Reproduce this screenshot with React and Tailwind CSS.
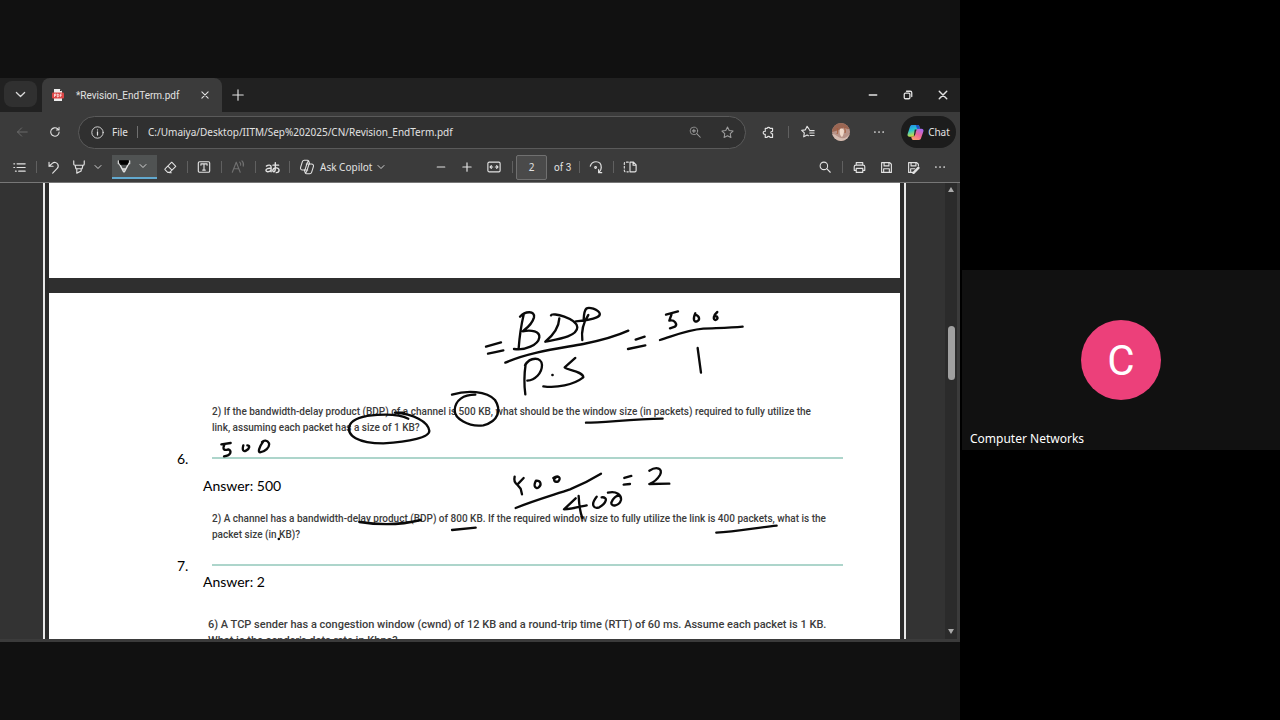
import React from 'react';
import { clsx } from 'clsx';

const Icon = ({ size = 'size-4', className, children }) => (
  <svg
    viewBox="0 0 16 16"
    className={clsx('shrink-0', size, className)}
    fill="none"
    stroke="currentColor"
    strokeWidth="1.1"
    strokeLinecap="round"
    strokeLinejoin="round"
    aria-hidden="true"
  >
    {children}
  </svg>
);

const Chevron = ({ size = 'size-2' }) => (
  <Icon size={size}>
    <path d="M2 5l6 6 6-6" strokeWidth="1.8" />
  </Icon>
);

const IconButton = ({ label, className = 'w-[26px]', children }) => (
  <button type="button" aria-label={label} className={clsx('flex h-6 shrink-0 items-center justify-center', className)}>
    {children}
  </button>
);

const Separator = () => (
  <span className="flex w-2 shrink-0 justify-center">
    <span className="h-3 w-px bg-[#606060]" />
  </span>
);

const CopilotOutline = () => (
  <Icon>
    <path d="M10.5 4.5L9.8 2.3C9.5 1.6 9 1.3 8.3 1.3H5.2c-.9 0-1.5.5-1.8 1.4L1.6 8.4c-.4 1.5.4 2.6 1.9 2.6h1.4M5.5 11.5l.7 2.2c.3.7.8 1 1.5 1h3.1c.9 0 1.5-.5 1.8-1.4l1.8-5.7c.4-1.5-.4-2.6-1.9-2.6h-1.4M4.9 11c.8 0 1.2-.4 1.4-1.1l1.9-6c.3-.9.7-1.5 1.4-1.9M11.1 5c-.8 0-1.2.4-1.4 1.1l-1.9 6c-.3.9-.7 1.5-1.4 1.9M7.3 5h3.8M4.9 11h3.8" />
  </Icon>
);

const CopilotLogo = () => (
  <svg viewBox="0 0 16 16" className="size-[17px] shrink-0" aria-hidden="true">
    <defs>
      <linearGradient id="cool" x1="0" y1="0" x2="0.3" y2="1">
        <stop offset="0" stopColor="#2386e8" />
        <stop offset="0.5" stopColor="#29c7d2" />
        <stop offset="1" stopColor="#d4dd3c" />
      </linearGradient>
      <linearGradient id="warm" x1="0.8" y1="0" x2="0.2" y2="1">
        <stop offset="0" stopColor="#a56af4" />
        <stop offset="0.5" stopColor="#ee6599" />
        <stop offset="1" stopColor="#ffa36d" />
      </linearGradient>
    </defs>
    <path d="M4.8 1h5c1 0 1.5.5 1.8 1.4l.6 2h-1.5c-1 0-1.5.5-1.8 1.5L7.5 10.500c-.3 1-.9 1.500-1.900 1.500H2.500C.9 12 .1 10.900.6 9.400L2.800 2.500C3.100 1.500 3.800 1 4.800 1z" fill="url(#cool)" />
    <path d="M11.200 15h-5c-1 0-1.500-.5-1.800-1.400l-.5-1.600h1.500c1 0 1.600-.5 1.900-1.500l1.500-4.600c.3-1 .8-1.500 1.800-1.500h2.900c1.600 0 2.400 1.100 1.900 2.600l-2.200 6.500c-.3 1-1 1.500-2 1.500z" fill="url(#warm)" />
    <path d="M8.300 1h1.500c1 0 1.500.5 1.800 1.400l.6 2H9.400z" fill="#2253c8" />
    <path d="M7.300 5.200h1.500L7.500 10.500 6.400 11.400z" fill="#252525" />
  </svg>
);

const TabBar = () => (
  <div className="flex h-[34px] items-stretch bg-[#212121]">
    <button type="button" aria-label="Tab actions" className="mt-[3px] ml-1 flex h-[26px] w-[33px] items-center justify-center rounded-lg bg-[#303030] text-[#dadada]">
      <Chevron size="size-[11px]" />
    </button>
    <div className="ml-[5px] flex w-[180px] items-center rounded-t-lg bg-[#3b3b3b] pr-3 pl-[10px]">
      <svg viewBox="0 0 12 12" className="size-3 shrink-0" aria-hidden="true">
        <path d="M2 0h6l2 2v10H2z" fill="#eeeeee" />
        <path d="M8 0l2 2H8z" fill="#222222" />
        <rect y="3.500" width="12" height="6" rx="1" fill="#dc4545" />
        <path d="M2.500 8V5h1.300v1.500H2.500M5.300 5v3h.8l.7-1.500-.7-1.500zM8.300 8V5h1.500M8.300 6.500h1.300" fill="none" stroke="#ffffff" strokeWidth="0.7" />
      </svg>
      <span className="ml-3 flex-1 font-[Roboto,sans-serif] text-[10px] whitespace-nowrap">*Revision_EndTerm.pdf</span>
      <button type="button" aria-label="Close tab">
        <Icon size="size-[10px]">
          <path d="M3 3l10 10M13 3L3 13" strokeWidth="1.700" />
        </Icon>
      </button>
    </div>
    <IconButton label="New tab" className="mt-[5px] ml-1 w-6">
      <Icon size="size-[14px]">
        <path d="M8 2v12M2 8h12" strokeWidth="1.300" />
      </Icon>
    </IconButton>
    <div className="ml-auto flex items-center">
      <IconButton label="Minimize" className="w-[35px]">
        <Icon size="size-3">
          <path d="M3 8h10" strokeWidth="1.800" />
        </Icon>
      </IconButton>
      <IconButton label="Restore" className="w-[35px]">
        <Icon size="size-3">
          <rect x="3" y="5.500" width="7.500" height="7.500" rx="1.500" strokeWidth="1.700" />
          <path d="M6 3h5c1.200 0 2 .8 2 2v5" strokeWidth="1.700" />
        </Icon>
      </IconButton>
      <IconButton label="Close" className="w-[35px]">
        <Icon size="size-3">
          <path d="M3 3l10 10M13 3L3 13" strokeWidth="1.900" />
        </Icon>
      </IconButton>
    </div>
  </div>
);

const AddressBar = () => (
  <div className="flex h-10 items-center pr-1 pl-[9px]">
    <IconButton label="Back">
      <Icon size="size-3" className="text-[#6b6b6b]">
        <path d="M15 8H2M7.500 2.500L2 8l5.500 5.500" strokeWidth="1.300" />
      </Icon>
    </IconButton>
    <IconButton label="Refresh" className="ml-[7px] w-[26px]">
      <Icon size="size-3">
        <path d="M13.500 8A5.600 5.600 0 1 1 11.500 3.700L13.200 5.200M13.400 1.800v3.500H9.900" strokeWidth="1.400" />
      </Icon>
    </IconButton>
    <form className="ml-[10px] flex h-[33px] flex-1 items-center rounded-full border border-[#5a5a5a] bg-[#303030] pr-[10px] pl-3">
      <Icon size="size-[13px]">
        <circle cx="8" cy="8" r="7" />
        <path d="M8 7.200v4M8 4.600v.2" strokeWidth="1.500" />
      </Icon>
      <label htmlFor="address" className="ml-2 text-[10px]">File</label>
      <span className="ml-[9px] h-3 w-px bg-[#707070]" />
      <input id="address" type="text" defaultValue="C:/Umaiya/Desktop/IITM/Sep%202025/CN/Revision_EndTerm.pdf" className="ml-[10px] min-w-0 flex-1 bg-transparent text-[10px] outline-none" />
      <IconButton label="Zoom" className="w-[33px] text-[#9c9c9c]">
        <Icon size="size-3">
          <circle cx="6.500" cy="6.500" r="5" />
          <path d="M10.300 10.300L15 15M6.500 4.500v4M4.500 6.500h4" strokeWidth="1.400" />
        </Icon>
      </IconButton>
      <IconButton label="Add to favorites" className="ml-2 w-4 text-[#9c9c9c]">
        <Icon size="size-[13px]">
          <path d="M8 1.200l2.100 4.300 4.700.7-3.400 3.300.8 4.700L8 12l-4.200 2.200.8-4.700L1.200 6.200l4.700-.7z" strokeWidth="1.300" />
        </Icon>
      </IconButton>
    </form>
    <IconButton label="Extensions" className="ml-[9px] w-[26px]">
      <Icon size="size-[13px]">
        <path d="M4 3h2.300a1.900 1.900 0 0 1 3.600 0H13v3.600a1.600 1.600 0 1 0 0 3V14H9.900a1.900 1.900 0 0 0-3.600 0H4v-3.800a1.900 1.900 0 1 1 0-3.600z" strokeWidth="1.400" />
      </Icon>
    </IconButton>
    <span className="mx-[3px] flex"><Separator /></span>
    <IconButton label="Favorites" className="w-[25px]">
      <Icon size="size-[14px]">
        <path d="M9.500 5.200L7 1.500 5 5.500l-4.200.6 3 3-.7 4.400L7 11.500l1.500.8M10 6.500h5M10 9.200h5M10.500 12h4.500" strokeWidth="1.300" />
      </Icon>
    </IconButton>
    <button type="button" aria-label="Profile" className="ml-[12px] shrink-0">
      <svg viewBox="0 0 18 18" className="size-[18px] rounded-full" aria-hidden="true">
        <rect width="18" height="18" fill="#b89489" />
        <path d="M0 0h18v5c-3 3-4-1-7 0S6 8 0 9z" fill="#9a6653" />
        <path d="M0 11c4 0 5 3 9 4s6-1 9-4v7H0z" fill="#d5bcb1" />
        <path d="M8 6c2-1 4 0 4 2s-1 5-2 6c-2-1-3-5-2-8z" fill="#f0d8c8" />
        <path d="M5 5c1 2 1 4 0 6M13 4c-1 2 1 3 0 6" stroke="#a65b39" fill="none" />
      </svg>
    </button>
    <IconButton label="Settings and more" className="ml-4 w-[26px]">
      <Icon size="size-3">
        <path d="M2.500 8h.1M8 8h.1M13.500 8h.1" strokeWidth="2.300" />
      </Icon>
    </IconButton>
    <button type="button" className="ml-[9px] flex h-8 w-[55px] shrink-0 items-center justify-center gap-1 rounded-full bg-[#1c1c1c] text-[10px]">
      <CopilotLogo />
      Chat
    </button>
  </div>
);

const PdfToolbar = () => (
  <div className="flex h-[31px] items-center border-b border-[#777777] px-[6px] text-[10px]">
    <IconButton label="Contents">
      <Icon size="size-[13px]">
        <path d="M5 3.500h10M5 8h10M7 12.500h8M1 3.500h1M1 8h1M3 12.500h1" strokeWidth="1.400" />
      </Icon>
    </IconButton>
    <Separator />
    <IconButton label="Undo">
      <Icon size="size-[13px]">
        <path d="M2.500 1.500v5h5M2.500 6.500L6.500 3C9 .8 12 1.800 13.300 4c1 2 .5 4-1 5.500L7 15" strokeWidth="1.400" />
      </Icon>
    </IconButton>
    <IconButton label="Highlight">
      <Icon size="size-[14px]">
        <path d="M2 1v3.500c0 1 .5 1.500 1.500 1.500h9c1 0 1.500-.5 1.500-1.500V1M3.500 6l1 4h7l1-4M5.500 10v5l5-2.500V10" strokeWidth="1.300" />
      </Icon>
    </IconButton>
    <IconButton label="Highlight color" className="w-3">
      <Chevron size="size-2" />
    </IconButton>
    <div className="ml-2 flex h-6 w-[45px] items-center border-b-2 border-[#62a9cf] bg-[#505353]">
      <IconButton label="Draw" className="w-6">
        <Icon size="size-[14px]">
          <path d="M2.500 5l5 9.500h1l5-9.500M6 11.500h4" strokeWidth="1.600" />
          <path d="M3 2h10l-1 4H4z" fill="#000000" stroke="#000000" />
          <path d="M1.500 5.500V2M14.500 5.500V2" strokeWidth="1.300" />
        </Icon>
      </IconButton>
      <IconButton label="Pen options" className="w-[14px]">
        <Chevron size="size-2" />
      </IconButton>
    </div>
    <IconButton label="Erase">
      <Icon size="size-[13px]">
        <path d="M9.500 1.500l5 5L7 14H4.500L1.500 11c-.6-.6-.6-1 0-1.500zM4.800 6.200l5 5M7 14.500h2" strokeWidth="1.300" />
      </Icon>
    </IconButton>
    <Separator />
    <IconButton label="Add text">
      <Icon size="size-[14px]">
        <rect x="1.500" y="2" width="13" height="12" rx="1.500" strokeWidth="1.300" />
        <path d="M4.500 6V4.500h7V6M8 4.500v7M6.500 11.500h3" strokeWidth="1.300" />
      </Icon>
    </IconButton>
    <Separator />
    <IconButton label="Read aloud" className="w-[26px] text-[#707070]">
      <Icon size="size-[14px]">
        <path d="M1.500 14L6 2.500 10.500 14M3 10h6M10 2.500c1 .8 1.300 2 1 3.500M12.500 1c1.800 1.700 2.200 3.800 1.500 6" strokeWidth="1.300" />
      </Icon>
    </IconButton>
    <Separator />
    <IconButton label="Translate">
      <Icon size="size-[15px]">
        <path d="M1.500 6.500c2-1.500 5-1.500 5 1v5M6.500 9c-3-.5-5.500.3-5.500 2s3 2.500 5.500 0M8.500 5.500h6M11 3v5.500c0 2 0 4-1.500 4-2 0-1.500-3.500 1.500-4s4 1 4 2.500-1.500 2.500-3 2.500" strokeWidth="1.500" />
      </Icon>
    </IconButton>
    <Separator />
    <button type="button" className="flex h-6 w-[100px] shrink-0 items-center gap-[5px] pl-[6px] whitespace-nowrap">
      <CopilotOutline />
      Ask Copilot
      <Chevron size="size-2" />
    </button>
    <IconButton label="Zoom out" className="ml-[35px] w-[26px]">
      <Icon size="size-3">
        <path d="M3 8h10" strokeWidth="1.600" />
      </Icon>
    </IconButton>
    <IconButton label="Zoom in">
      <Icon size="size-3">
        <path d="M8 2.500v11M2.500 8h11" strokeWidth="1.600" />
      </Icon>
    </IconButton>
    <IconButton label="Fit to width" className="w-7">
      <Icon size="size-[14px]">
        <rect x="1" y="2.500" width="14" height="11" rx="1.500" strokeWidth="1.300" />
        <path d="M3.500 8h3M9.500 8h3M5 6.500L3.500 8 5 9.500M11 6.500L12.500 8 11 9.500" strokeWidth="1.300" />
      </Icon>
    </IconButton>
    <Separator />
    <input type="text" defaultValue="2" aria-label="Page number" className="h-[25px] w-[31px] rounded-xs border border-[#707070] bg-[#4a4a4a] text-center text-[10px] outline-none" />
    <span className="ml-[7px] w-[21px] font-[Roboto,sans-serif] text-[10px] whitespace-nowrap">of 3</span>
    <Separator />
    <IconButton label="Rotate">
      <Icon size="size-[14px]">
        <path d="M1.500 7C2.500 3.500 5 2 8 2c4 0 6 3 6 6.500 0 2-.8 4-2.500 5.500M14.500 14.500h-3.500V11" strokeWidth="1.400" />
        <circle cx="7.500" cy="8.500" r="1" strokeWidth="1.300" />
      </Icon>
    </IconButton>
    <Separator />
    <IconButton label="Page view">
      <Icon size="size-[14px]">
        <path d="M8 2.500h4l3 3v6.500c0 1-.5 1.500-1.500 1.500H8zM11.500 2.500V6H15" strokeWidth="1.300" />
        <path d="M6 2.500H3c-1 0-1.500.5-1.500 1.500v8c0 1 .5 1.500 1.500 1.500h3" strokeDasharray="2 2.200" strokeWidth="1.300" />
      </Icon>
    </IconButton>
    <div className="ml-auto flex items-center">
      <IconButton label="Find">
        <Icon size="size-3">
          <circle cx="6.500" cy="6.500" r="5" strokeWidth="1.400" />
          <path d="M10.300 10.300L15 15" strokeWidth="1.500" />
        </Icon>
      </IconButton>
      <Separator />
      <IconButton label="Print">
        <Icon size="size-[13px]">
          <path d="M4 5V2h8v3M4 11.500H1.500V7c0-1.300.7-2 2-2h9c1.300 0 2 .7 2 2v4.500H12M4 9h8v5H4z" strokeWidth="1.400" />
        </Icon>
      </IconButton>
      <IconButton label="Save" className="w-7">
        <Icon size="size-[13px]">
          <path d="M2 2h10l2 2v10H2zM5 2v4h6V2M4.500 14V9.500h7V14" strokeWidth="1.400" />
        </Icon>
      </IconButton>
      <IconButton label="Save as">
        <Icon size="size-[13px]">
          <path d="M7 14H2V2h10l2 2v2M5 2v4h6V2M4.500 14V9.500h5" strokeWidth="1.400" />
          <path d="M8 14.500l6-6" strokeWidth="3" />
        </Icon>
      </IconButton>
      <IconButton label="More" className="w-7">
        <Icon size="size-3">
          <path d="M2.500 8h.1M8 8h.1M13.500 8h.1" strokeWidth="2.300" />
        </Icon>
      </IconButton>
    </div>
  </div>
);

const Ink = () => (
  <svg
    viewBox="0 0 960 456"
    className="pointer-events-none absolute top-0 left-0 h-auto w-full"
    fill="none"
    stroke="#0a0a0a"
    strokeLinecap="round"
    strokeLinejoin="round"
    aria-hidden="true"
  >
    {/* BDP / P.S = 500 / 1 */}
    <g transform="translate(470 107) scale(0.3333)" strokeWidth="7">
      <path d="M48 170L93 157M54 191Q75 187 100 181" />
      <path d="M161 74Q150 120 146 175M150 80C166 62 196 62 192 82C186 105 165 118 158 124C185 118 210 125 208 142C205 165 165 182 132 177" />
      <path d="M268 85Q266 122 226 155M243 76C246 66 320 85 322 112C322 140 260 148 226 155" />
      <path d="M355 75Q332 110 337 150M341 88C343 50 352 50 370 56C394 66 394 76 380 82C360 91 340 92 318 94" />
      <path d="M106 218C180 185 270 175 340 162C400 150 440 138 475 122" />
      <path d="M167 222Q160 270 166 313M165 226C180 200 215 200 216 225C216 250 195 270 172 272M247 255h1" />
      <path d="M316 204L284 232C290 240 340 244 340 262C310 285 260 295 220 289" />
      <path d="M497 149L524 140M474 177L526 166" />
      <path d="M588 74L624 64M605 72L598 92C613 88 624 102 615 110L600 115" />
      <path d="M676 70C668 88 672 97 681 94C691 90 689 78 676 74M742 66C730 76 728 90 737 90C746 86 744 76 732 80" />
      <path d="M570 150C610 138 650 120 700 116C745 114 780 114 818 110M683 174L693 248" />
    </g>
    {/* answer and circle on the first question */}
    <g transform="translate(160 197) scale(0.3333)" strokeWidth="7">
      <path d="M184 193L212 189M193 194C186 210 195 212 205 208C216 212 214 226 192 229" />
      <path d="M250 196C246 210 250 216 258 212C270 206 270 196 262 196M310 184C298 200 293 217 300 217C315 216 330 202 327 190C322 180 312 180 306 186" />
      <path d="M745 116C710 98 590 98 570 134C556 168 596 190 670 190C750 186 810 172 808 152C804 124 760 102 705 98h28" />
    </g>
    {/* 800 / 400 = 2 */}
    <g transform="translate(430 197) scale(0.3333)" strokeWidth="7">
      <path d="M66 44C110 30 170 32 195 60C215 90 205 125 160 136C115 142 73 115 74 90C76 60 100 44 136 44" />
      <path d="M468 128C520 128 600 118 698 116M66 450L137 443M859 458C920 455 980 443 1040 437" />
      <path d="M254 290Q250 306 262 314L272 326L276 343M281 294L262 314M318 302C308 320 318 328 326 322C336 314 332 302 320 302M370 294C385 284 395 294 385 304C375 308 365 300 380 290" />
      <path d="M257 384C310 362 370 345 420 328C460 312 490 295 513 281" />
      <path d="M437 355L402 388C430 386 450 380 470 376M446 348Q448 390 457 414" />
      <path d="M500 350C480 375 492 388 508 382C530 370 535 350 515 352M534 338C560 332 575 345 573 360C568 378 543 382 544 368C548 355 560 345 568 348" />
      <path d="M583 294L604 288M581 314L600 312M658 272C680 258 700 265 690 285C680 302 668 308 658 312L718 311" />
    </g>
    <g transform="translate(160 317) scale(0.3333)" strokeWidth="7">
      <path d="M598 66C650 74 720 76 782 60M356 117h1" />
    </g>
  </svg>
);

const questions = [
  {
    number: '6.',
    lines: [
      '2) If the bandwidth-delay product (BDP) of a channel is 500 KB, what should be the window size (in packets) required to fully utilize the',
      'link, assuming each packet has a size of 1 KB?'
    ],
    answer: 'Answer: 500',
    spacing: 'mt-[11px] mb-[17px]'
  },
  {
    number: '7.',
    lines: [
      '2) A channel has a bandwidth-delay product (BDP) of 800 KB. If the required window size to fully utilize the link is 400 packets, what is the',
      'packet size (in KB)?'
    ],
    answer: 'Answer: 2',
    spacing: 'mb-[27px]'
  }
];

const Document = () => (
  <main className="relative flex h-[456px] overflow-hidden bg-[#333333]">
    <div className="ml-[43px] flex flex-1 flex-col border-x-2 border-[#e8e8e8] bg-[#2b2b2b] px-1">
      <div className="h-[95px] shrink-0 bg-white" />
      <div className="h-[15px] shrink-0 bg-[#2f2f2f]" />
      <section className="flex-1 bg-white pt-[111px] pr-[57px] pl-[128px] text-[#3c3c3c]">
        {questions.map((question) => (
          <article key={question.number}>
            <div className="flex items-end">
              <span className="w-[35px] shrink-0 font-[Lato,sans-serif] text-sm leading-4 text-black">{question.number}</span>
              <p className="mb-2 flex-1 border-b-2 border-[#add5cb] pb-[21px] font-[Roboto,sans-serif] text-[10px] leading-4 font-medium whitespace-nowrap">
                {question.lines[0]}
                <br />
                {question.lines[1]}
              </p>
            </div>
            <p className={clsx('pl-[26px] font-[Lato,sans-serif] text-sm leading-4 text-black', question.spacing)}>{question.answer}</p>
          </article>
        ))}
        <p className="pl-[31px] font-[Roboto,sans-serif] text-[11px] leading-4 font-medium whitespace-nowrap">
          6) A TCP sender has a congestion window (cwnd) of 12 KB and a round-trip time (RTT) of 60 ms. Assume each packet is 1 KB.
          <br />
          What is the sender's data rate in Kbps?
        </p>
      </section>
    </div>
    <div className="ml-[39px] flex w-[15px] flex-col items-center justify-between border-r-3 border-[#3b3b3b] bg-[#2b2b2b] py-1 text-[#aaaaaa]">
      <svg viewBox="0 0 6 6" className="size-[6px]" fill="currentColor" aria-hidden="true"><path d="M3 0l3 5H0z" /></svg>
      <span className="mb-[116px] h-[54px] w-[7px] rounded-full bg-[#a0a0a0]" />
      <svg viewBox="0 0 6 6" className="size-[6px]" fill="currentColor" aria-hidden="true"><path d="M3 5l3-5H0z" /></svg>
    </div>
    <Ink />
  </main>
);

const App = () => {
  return (
    <div className="flex min-h-screen bg-black">
      {/* Shared screen */}
      <div className="flex w-3/4 flex-col justify-center bg-[#111111]">
        <div className="border-b-3 border-[#3b3b3b] bg-[#3b3b3b] font-['Noto_Sans',sans-serif] text-[#e2e2e2]">
          <TabBar />
          <AddressBar />
          <PdfToolbar />
          <Document />
        </div>
      </div>

      {/* Participant */}
      <aside className="flex w-1/4 flex-col justify-center pl-[2px]">
        <div className="relative flex h-[180px] items-center justify-center bg-[#111111] font-['Noto_Sans',sans-serif] text-white">
          <div className="flex size-20 items-center justify-center rounded-full bg-[#ec407a] font-[Roboto,sans-serif] text-[42px]">C</div>
          <span className="absolute bottom-[3px] left-2 text-xs">Computer Networks</span>
        </div>
      </aside>
    </div>
  );
};

export default App;
